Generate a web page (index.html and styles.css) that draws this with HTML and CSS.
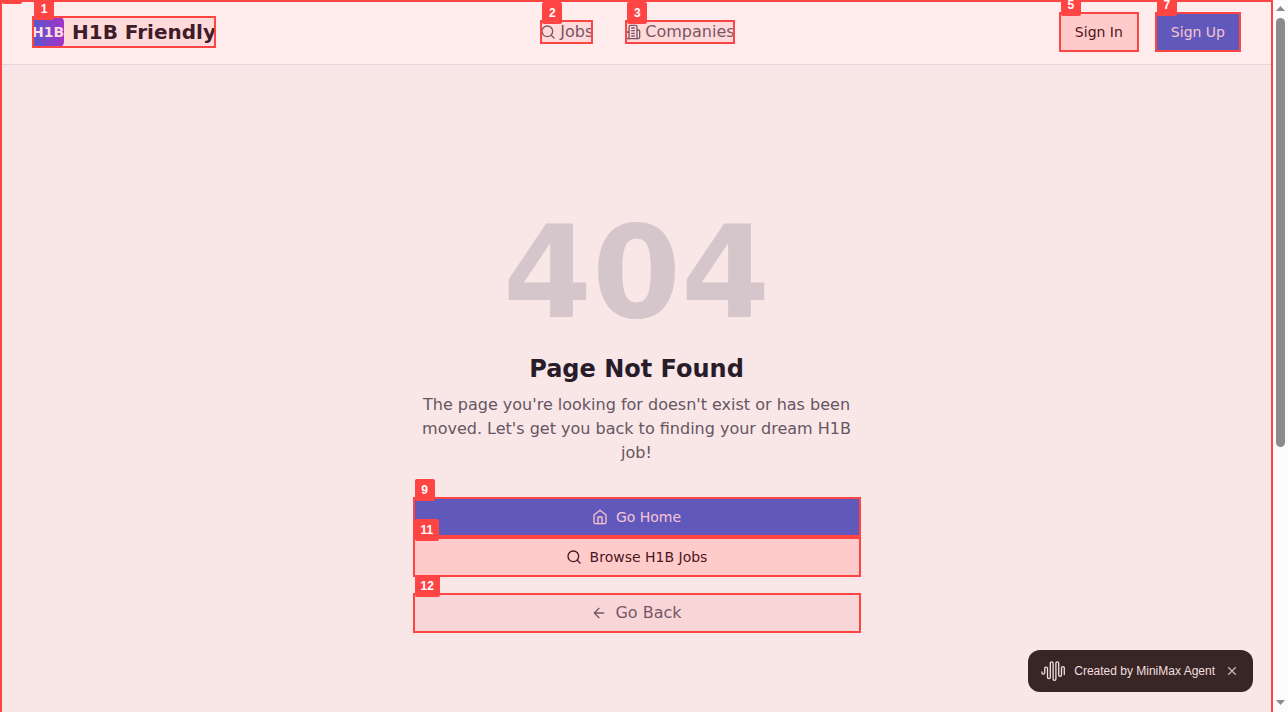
FILE: index.html
```html
<!DOCTYPE html>
<html lang="en">
<head>
<meta charset="utf-8">
<meta name="viewport" content="width=device-width, initial-scale=1">
<title>Page Not Found - H1B Friendly</title>
<link rel="stylesheet" href="styles.css">
</head>
<body>
<div class="window">
  <div class="page">
    <span class="tag"></span>
    <header class="header">
      <a class="brand marked" href="#"><span class="tag">1</span><span class="brand-mark">H1B</span><span class="brand-name">H1B Friendly</span></a>
      <nav class="nav">
        <a class="nav-link marked" href="#"><span class="tag">2</span>
          <svg class="icon" viewBox="0 0 24 24"><circle cx="11" cy="11" r="8"/><path d="m21 21-4.3-4.3"/></svg><span>Jobs</span></a>
        <a class="nav-link marked" href="#"><span class="tag">3</span>
          <svg class="icon" viewBox="0 0 24 24"><path d="M6 22V4a2 2 0 0 1 2-2h8a2 2 0 0 1 2 2v18Z"/><path d="M6 12H4a2 2 0 0 0-2 2v6a2 2 0 0 0 2 2h2M18 9h2a2 2 0 0 1 2 2v9a2 2 0 0 1-2 2h-2M10 6h4M10 10h4M10 14h4M10 18h4"/></svg><span>Companies</span></a>
      </nav>
      <div class="actions">
        <button class="button button-light marked" type="button"><span class="tag">5</span>Sign In</button>
        <button class="button button-primary marked" type="button"><span class="tag">7</span>Sign Up</button>
      </div>
    </header>
    <main class="main">
      <section class="message">
        <h1 class="code">404</h1>
        <h2 class="title">Page Not Found</h2>
        <p class="text">The page you're looking for doesn't exist or has been moved. Let's get you back to finding your dream H1B job!</p>
        <div class="choices">
          <button class="button button-primary marked" type="button"><span class="tag">9</span>
            <svg class="icon" viewBox="0 0 24 24"><path d="m3 9 9-7 9 7v11a2 2 0 0 1-2 2H5a2 2 0 0 1-2-2z"/><path d="M9 22V12h6v10"/></svg>Go Home</button>
          <button class="button button-light marked" type="button"><span class="tag">11</span>
            <svg class="icon" viewBox="0 0 24 24"><circle cx="11" cy="11" r="8"/><path d="m21 21-4.3-4.3"/></svg>Browse H1B Jobs</button>
        </div>
        <button class="button button-back marked" type="button"><span class="tag">12</span>
          <svg class="icon" viewBox="0 0 24 24"><path d="m12 19-7-7 7-7M19 12H5"/></svg>Go Back</button>
      </section>
    </main>
    <aside class="credit">
      <svg class="wave" viewBox="0 0 26 22"><path d="M1.900 12v.8a1.400 1.400 0 0 0 2.800 0V8.500a1.400 1.400 0 0 1 2.800 0v8.700a1.400 1.400 0 0 0 2.800 0V3.300a1.400 1.400 0 0 1 2.800 0v15.600a1.400 1.400 0 0 0 2.800 0V3.300a1.400 1.400 0 0 1 2.800 0v11.700a1.400 1.400 0 0 0 2.800 0V8a1.400 1.400 0 0 1 2.800 0v6.500"/></svg>
      <span>Created by MiniMax Agent</span>
      <button class="close" type="button" aria-label="Close"><svg viewBox="0 0 8 8"><path d="m1 1 6 6M7 1 1 7"/></svg></button>
    </aside>
  </div>
  <div class="scrollbar" aria-hidden="true">
    <svg class="arrow" viewBox="0 0 9 5"><path d="M0 5 4.500 0 9 5Z"/></svg>
    <div class="track"><div class="thumb"></div></div>
    <svg class="arrow" viewBox="0 0 9 5"><path d="M0 0 4.500 5 9 0Z"/></svg>
  </div>
</div>
</body>
</html>
```
FILE: styles.css
```css
* { box-sizing: border-box; }
body { margin: 0; background: #f8e7e6; font-family: "DejaVu Sans", sans-serif; font-size: 16px; line-height: 24px; }
a { color: inherit; text-decoration: none; }
button { font: inherit; border: 0; padding: 0; }
h1, h2, p { margin: 0; }

.window { display: flex; height: 100vh; overflow: hidden; }
.page { position: relative; flex: 1; min-width: 0; overflow: hidden; }
.page::after { content: ""; position: absolute; inset: 0; border: 2px solid #ff4444; border-bottom: 0; pointer-events: none; }

.marked { position: relative; }
.marked::after { content: ""; position: absolute; inset: 0; border: 2px solid #ff4444; pointer-events: none; }
.tag { position: absolute; z-index: 1; top: -18px; left: 2px; min-width: 20px; height: 22px; padding: 0 6px; border-radius: 2px; background: #ff4444; color: #fff; font: bold 12px/22px "Liberation Sans", sans-serif; text-align: center; }

.header { display: flex; align-items: center; justify-content: space-between; height: 65px; padding: 0 32px; border-bottom: 1px solid #e4d5df; background: #ffecec; }
.brand { display: flex; align-items: center; gap: 8px; background: #ffdada; color: #401b2a; }
.brand-mark { display: flex; align-items: center; justify-content: center; width: 32px; height: 32px; border-radius: 6px; background: linear-gradient(90deg, #5558cb, #a333c7); color: #ffdcdf; font-size: 14px; font-weight: bold; }
.brand-name { font-size: 20px; font-weight: bold; line-height: 28px; }
.nav { display: flex; gap: 32px; }
.nav-link { display: flex; align-items: center; gap: 4px; background: #ffdada; color: #795666; }
.actions { display: flex; gap: 16px; }
.icon { flex: none; width: 16px; height: 16px; fill: none; stroke: currentColor; stroke-width: 2; stroke-linecap: round; stroke-linejoin: round; }

.button { display: flex; align-items: center; justify-content: center; gap: 8px; height: 40px; padding: 0 16px; font-size: 14px; line-height: 20px; }
.button-light { background: #ffcbca; color: #4c1621; }
.button-primary { background: #6059bb; color: #f8c5d0; }
.button-back { background: #f8d6d8; color: #775867; font-size: 16px; }

.main { display: flex; align-items: center; justify-content: center; min-height: 100vh; padding: 0 16px; }
.message { display: flex; flex-direction: column; width: 100%; max-width: 448px; text-align: center; }
.code { color: #d5c6cb; font-size: 128px; line-height: 128px; }
.title { margin: 16px 0 8px; color: #281b2a; font-size: 24px; line-height: 32px; }
.text { color: #675563; }
.choices { display: flex; flex-direction: column; margin: 32px 0 16px; }

.credit { position: absolute; right: 20px; bottom: 20px; display: flex; align-items: center; gap: 8px; height: 42px; padding: 0 16px 0 12px; border-radius: 12px; background: #382626; color: #f2dfdf; font: 12px/16px "Liberation Sans", sans-serif; }
.wave { width: 26px; height: 22px; fill: none; stroke: #f2dfdf; stroke-width: 1.300; stroke-linecap: round; }
.close { display: flex; margin-left: 4px; background: none; color: #cab8b8; }
.close svg { width: 10px; height: 10px; fill: none; stroke: currentColor; stroke-width: 1; }

.scrollbar { display: flex; flex-direction: column; align-items: center; width: 15px; padding: 6px 0 7px; background: #fcfcfc; }
.arrow { width: 9px; height: 5px; fill: #8b8b8b; }
.track { flex: 1; padding: 7px 0; }
.thumb { width: 9px; height: 63.600%; border-radius: 5px; background: #8b8b8b; }
```
